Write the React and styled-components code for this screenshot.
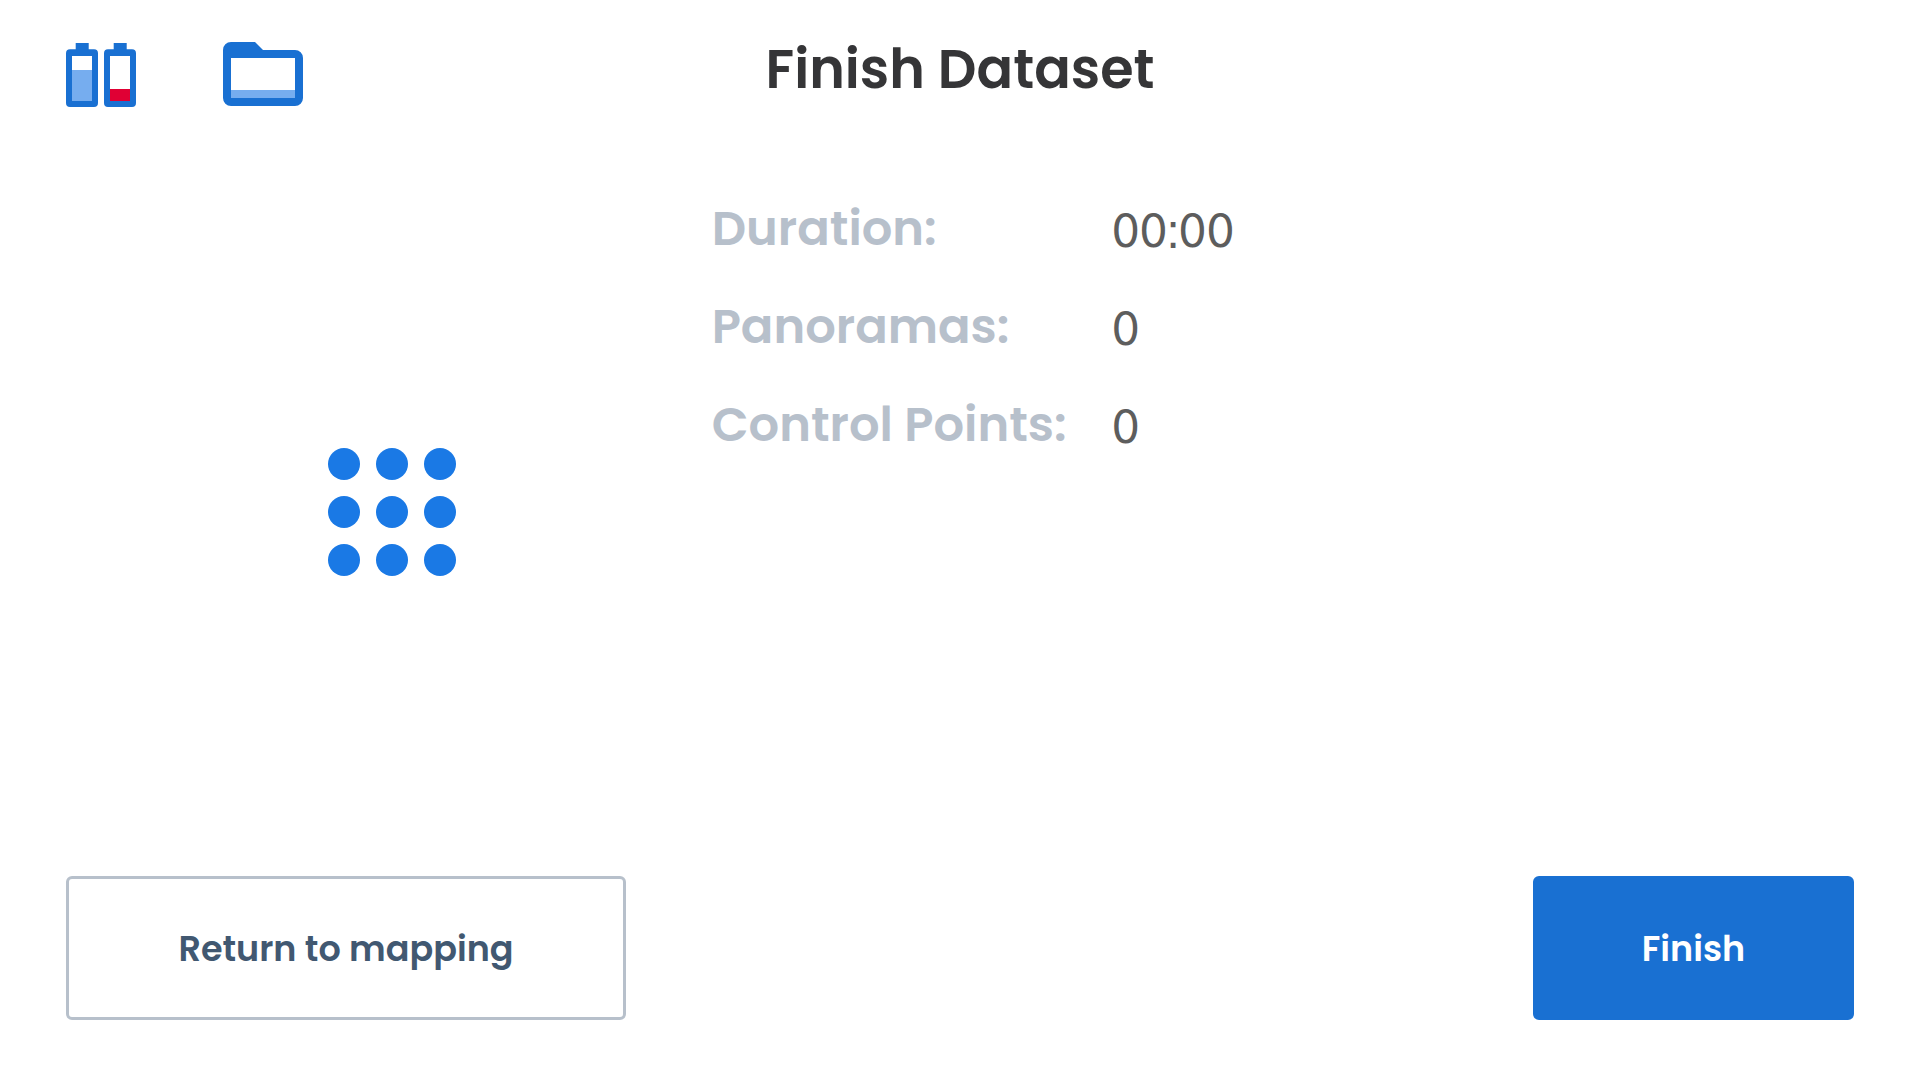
//-----------------------------------------------------------------------------
// Imports
//-----------------------------------------------------------------------------
import React from 'react'
import styled, { createGlobalStyle } from 'styled-components'
//-----------------------------------------------------------------------------
// Config
//-----------------------------------------------------------------------------
const colors = {
  primary: "#1970d2",
  primaryLight: "#76adef",
  spinner: "#1a79e5",
  danger: "#e00034",
  title: "#353537",
  label: "#b7c0cb",
  value: "#5d5d5d",
  secondaryText: "#415871"
}

const details = [
  { label: "Duration:", value: "00:00" },
  { label: "Panoramas:", value: "0" },
  { label: "Control Points:", value: "0" }
]

const dots = [16, 64, 112]
//-----------------------------------------------------------------------------
// Icons
//-----------------------------------------------------------------------------
// level is the height of the charge, out of 45
const Battery = ({ level, color }) => (
  <svg width="32" height="64" viewBox="0 0 32 64" aria-hidden="true">
    <path
      fill={colors.primary}
      d="M9.7 0H22.7V6.3H28A4 4 0 0 1 32 10.3V60A4 4 0 0 1 28 64H4A4 4 0 0 1 0 60V10.3A4 4 0 0 1 4 6.3H9.7Z"/>
    <rect x="6" y="13" width="20" height="45" fill="#fff"/>
    <rect x="6" y={58 - level} width="20" height={level} fill={color}/>
  </svg>
)

const Folder = () => (
  <svg width="80" height="64" viewBox="0 0 80 64" aria-hidden="true">
    <path
      fill={colors.primary}
      d="M8 0H32L40 8H72A8 8 0 0 1 80 16V56A8 8 0 0 1 72 64H8A8 8 0 0 1 0 56V8A8 8 0 0 1 8 0Z"/>
    <rect x="8" y="16" width="64" height="40" fill="#fff"/>
    <rect x="8" y="48" width="64" height="8" fill={colors.primaryLight}/>
  </svg>
)

const Spinner = () => (
  <svg width="128" height="128" viewBox="0 0 128 128" fill={colors.spinner} role="img" aria-label="Loading">
    {dots.map(cy => dots.map(cx => <circle key={`${cx}-${cy}`} cx={cx} cy={cy} r="16"/>))}
  </svg>
)
//-----------------------------------------------------------------------------
// Component
//-----------------------------------------------------------------------------
export default function App() {
  return (
    <Page>
      <GlobalStyle/>
      <Header>
        <Status>
          <Batteries>
            <Battery level={31} color={colors.primaryLight}/>
            <Battery level={12} color={colors.danger}/>
          </Batteries>
          <Folder/>
        </Status>
        <Title>Finish Dataset</Title>
      </Header>
      <Content>
        <SpinnerContainer>
          <Spinner/>
        </SpinnerContainer>
        <Details>
          {details.map(({ label, value }) => (
            <React.Fragment key={label}>
              <Label>{label}</Label>
              <Value>{value}</Value>
            </React.Fragment>
          ))}
        </Details>
      </Content>
      <Footer>
        <Button type="button" $width="560px">Return to mapping</Button>
        <Button type="button" $width="321px" $primary>Finish</Button>
      </Footer>
    </Page>
  )
}
//-----------------------------------------------------------------------------
// Styled Components
//-----------------------------------------------------------------------------
const GlobalStyle = createGlobalStyle`
  * {
    box-sizing: border-box;
  }
  body {
    margin: 0;
    background-color: #fff;
    font-family: Poppins, Inter, sans-serif;
  }
`

const Page = styled.div`
  min-height: 100vh;
  padding: 40px 66px 60px;
  display: flex;
  flex-direction: column;
`

const Header = styled.header`
  display: grid;
  grid-template-columns: 1fr auto 1fr;
  align-items: start;
`

const Status = styled.div`
  padding-top: 1px;
  display: flex;
  align-items: center;
  gap: 87px;
`

const Batteries = styled.div`
  padding-top: 2px;
  display: flex;
  gap: 6px;
`

const Title = styled.h1`
  margin: 0;
  color: ${colors.title};
  font-size: 54px;
  font-weight: 600;
  line-height: 58px;
`

const Content = styled.main`
  flex: 1;
  padding-top: 73px;
  display: grid;
  grid-template-columns: 36% 1fr;
  align-items: start;
`

const SpinnerContainer = styled.div`
  padding: 268px 0 0 8px;
  display: flex;
  justify-content: center;
`

const Details = styled.dl`
  margin: 0;
  padding-left: 2px;
  display: grid;
  grid-template-columns: 400px 1fr;
  grid-auto-rows: 98px;
  align-items: center;
`

const Label = styled.dt`
  color: ${colors.label};
  font-size: 48px;
  font-weight: 600;
`

const Value = styled.dd`
  margin: 0;
  color: ${colors.value};
  font-family: Oxygen, "Noto Sans", sans-serif;
  font-size: 46px;
`

const Footer = styled.footer`
  display: flex;
  justify-content: space-between;
`

const Button = styled.button`
  width: ${props => props.$width};
  height: 144px;
  border: 3px solid ${props => props.$primary ? colors.primary : colors.label};
  border-radius: 6px;
  background-color: ${props => props.$primary ? colors.primary : "#fff"};
  color: ${props => props.$primary ? "#fff" : colors.secondaryText};
  font-family: inherit;
  font-size: 35px;
  font-weight: 600;
  cursor: pointer;
`
